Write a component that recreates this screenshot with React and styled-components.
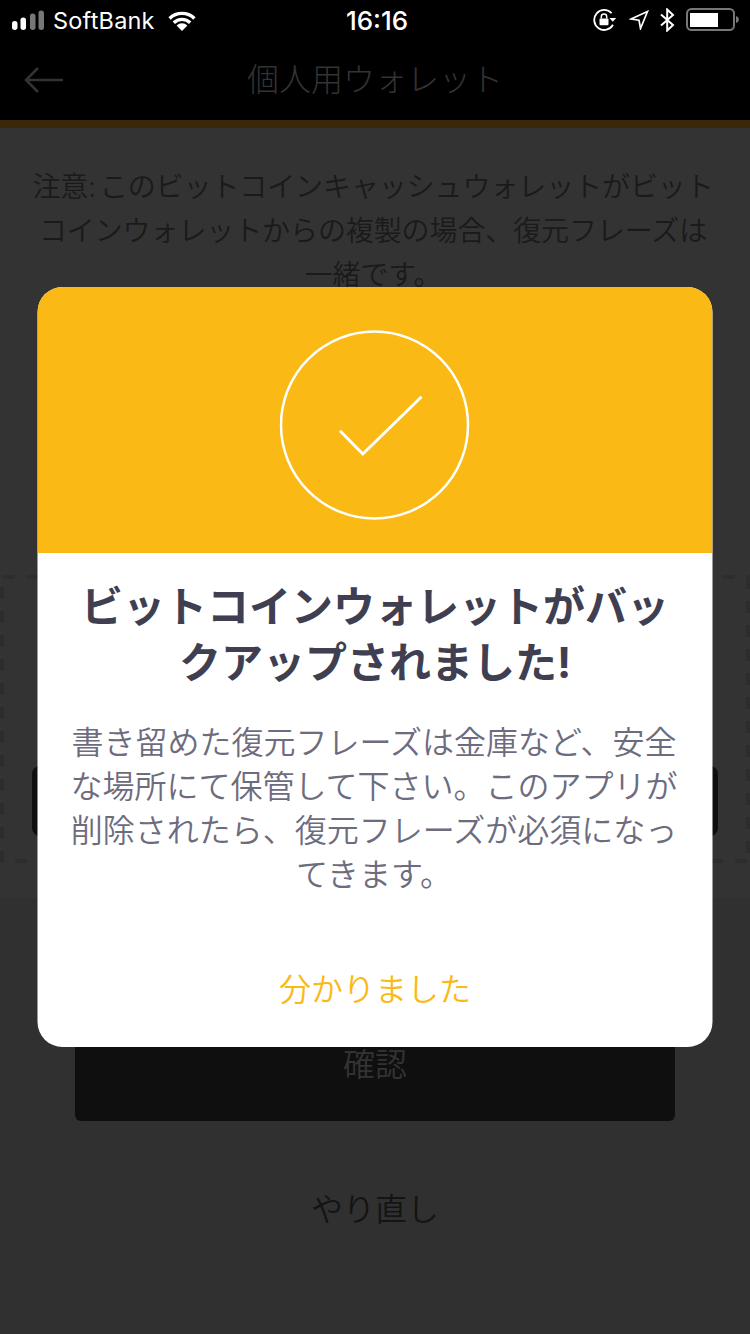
import React from 'react';
import styled, { createGlobalStyle } from 'styled-components';

const GlobalStyle = createGlobalStyle`
  html, body {
    margin: 0;
    padding: 0;
    background: #303030;
  }
  * {
    box-sizing: border-box;
  }
`;

const jpFont = `Inter, "Noto Sans CJK JP", sans-serif`;
const dash = '#2d2d2d';

const Screen = styled.div`
  position: relative;
  width: 750px;
  height: 1334px;
  overflow: hidden;
  background: #333333;
  font-family: ${jpFont};
  font-size: 32px;
  font-weight: 350;
`;

const StatusBar = styled.div`
  display: grid;
  grid-template-columns: 1fr auto 1fr;
  align-items: center;
  height: 40px;
  padding: 0 10px 0 12px;
  background: #000;
  color: #fff;
`;

const StatusLeft = styled.div`
  display: flex;
  align-items: center;
`;

const StatusRight = styled.div`
  display: flex;
  align-items: center;
  justify-content: flex-end;
  gap: 11px;
`;

const Carrier = styled.span`
  margin: 0 13px 0 9px;
  font-size: 23.5px;
  font-weight: 400;
  letter-spacing: 0.2px;
`;

const Clock = styled.span`
  padding-left: 2px;
  font-size: 26px;
  font-weight: 500;
`;

const NavBar = styled.div`
  display: grid;
  grid-template-columns: 1fr auto 1fr;
  align-items: center;
  height: 80px;
  padding: 0 24px;
  background: #000;
`;

const NavTitle = styled.div`
  color: #333;
  font-weight: 300;
  line-height: 44px;
`;

const GoldLine = styled.div`
  height: 8px;
  background: #3a2808;
`;

const Notice = styled.p`
  margin: 0;
  padding: 37px 34px 0 30px;
  color: #1a1a1a;
  font-size: 28px;
  line-height: 44px;
  letter-spacing: -0.1px;
  text-align: center;
  word-spacing: -4px;
`;

/* dashes are 12 on, 12 off and thicker than a css dashed border gives */
const DashedBox = styled.div`
  display: flex;
  flex-direction: column;
  justify-content: flex-end;
  height: 288px;
  margin-top: 278px;
  padding: 0 32px 27px;
  background-image:
    repeating-linear-gradient(90deg, ${dash} 0 12px, transparent 12px 24px),
    repeating-linear-gradient(90deg, ${dash} 0 12px, transparent 12px 24px),
    repeating-linear-gradient(180deg, ${dash} 0 12px, transparent 12px 24px),
    repeating-linear-gradient(180deg, ${dash} 0 12px, transparent 12px 24px);
  background-repeat: no-repeat;
  background-size: 100% 4px, 100% 4px, 4px 100%, 4px 100%;
  background-position: 3px 0, 15px 100%, 0 12px, 100% 2px;
`;

const PhraseBar = styled.div`
  height: 70px;
  border-radius: 8px;
  background: #0f0f0f;
`;

const Footer = styled.div`
  display: flex;
  flex-direction: column;
  align-items: center;
  height: 436px;
  margin-top: 35px;
  padding-top: 111px;
  background: #303030;
`;

const ConfirmButton = styled.div`
  display: flex;
  align-items: center;
  justify-content: center;
  width: 600px;
  height: 112px;
  padding-bottom: 6px;
  border-radius: 6px;
  background: #0f0f0f;
  color: #333;
`;

const RetryLink = styled.div`
  margin-top: 67px;
  color: #141414;
  line-height: 44px;
`;

const Modal = styled.div`
  position: absolute;
  top: 287px;
  left: 50%;
  display: flex;
  flex-direction: column;
  width: 675px;
  height: 760px;
  overflow: hidden;
  border-radius: 25px;
  background: #fff;
  transform: translateX(-50%);
`;

const ModalBanner = styled.div`
  display: flex;
  justify-content: center;
  height: 266px;
  padding-top: 42px;
  background: #fbb916;
`;

const ModalBody = styled.div`
  display: flex;
  flex: 1;
  flex-direction: column;
  align-items: center;
  padding: 26px 30px 0;
  text-align: center;
`;

const ModalTitle = styled.h2`
  margin: 0;
  color: #403f52;
  font-size: 42px;
  font-weight: 700;
  line-height: 56px;
`;

const ModalText = styled.p`
  margin: 30px 0 0;
  padding-right: 2px;
  color: #6d6c7e;
  line-height: 44px;
`;

const ModalAction = styled.div`
  margin-top: 71px;
  color: #fbb916;
  line-height: 44px;
`;

const SignalIcon = () => (
  <svg width="32" height="20" viewBox="0 0 32 20">
    <rect x="0" y="11" width="5.5" height="9" rx="2.7" fill="#fff" />
    <rect x="8.5" y="7.5" width="5.5" height="12.5" rx="2.7" fill="#fff" />
    <rect x="18" y="3.5" width="5.5" height="16.5" rx="2.7" fill="#777" />
    <rect x="26.5" y="0.5" width="5.5" height="19.5" rx="2.7" fill="#777" />
  </svg>
);

const WifiIcon = () => (
  <svg width="28" height="21" viewBox="0 0 28 21">
    <path d="M14 21 L8.6 15.4 A7.6 7.6 0 0 1 19.4 15.4 Z" fill="#fff" />
    <path d="M4.6 11.5 A13.4 13.4 0 0 1 23.4 11.5 L21 13.9 A10 10 0 0 0 7 13.9 Z" fill="#fff" />
    <path d="M0.4 7.3 A19.2 19.2 0 0 1 27.6 7.3 L25.2 9.7 A15.8 15.8 0 0 0 2.8 9.7 Z" fill="#fff" />
  </svg>
);

const RotationLockIcon = () => (
  <svg width="25" height="22" viewBox="0 0 25 22" fill="none">
    <path d="M18.6 4.2 A10 10 0 1 0 20 15.8" stroke="#fff" strokeWidth="1.8" />
    <path d="M16.4 9 L23.2 9 L19.8 12.8 Z" fill="#fff" />
    <rect x="6.5" y="9.5" width="9" height="6.8" rx="1" fill="#fff" />
    <path d="M8.3 9.5 V7.8 A2.7 2.7 0 0 1 13.7 7.8 V9.5" stroke="#fff" strokeWidth="1.5" />
  </svg>
);

const LocationIcon = () => (
  <svg width="20" height="20" viewBox="0 0 20 20" fill="none">
    <path d="M18.5 1.5 L2 9 L10 10.2 L11.5 18.5 Z" stroke="#fff" strokeWidth="1.7" strokeLinejoin="miter" />
  </svg>
);

const BluetoothIcon = () => (
  <svg width="15" height="24" viewBox="0 0 15 24" fill="none">
    <path d="M1 6.5 L13 17 L7.2 22.5 V1.5 L13 7 L1 17.5" stroke="#fff" strokeWidth="2" />
  </svg>
);

const BatteryIcon = () => (
  <svg width="54" height="24" viewBox="0 0 54 24" fill="none">
    <rect x="1" y="1" width="47" height="21" rx="4.5" stroke="#777" strokeWidth="2" />
    <rect x="4" y="5" width="28" height="14" fill="#fff" />
    <path d="M50 8 A4 4 0 0 1 53 11.5 A4 4 0 0 1 50 15 Z" fill="#777" />
  </svg>
);

const BackArrow = () => (
  <svg width="40" height="26" viewBox="0 0 40 26" fill="none" stroke="#333" strokeWidth="2.5">
    <path d="M39 13 H2" />
    <path d="M14 1 L2 13 L14 25" />
  </svg>
);

const SuccessBadge = () => (
  <svg width="192" height="192" viewBox="0 0 192 192" fill="none" stroke="#fff" strokeWidth="2.5">
    <circle cx="95" cy="96" r="93.5" />
    <path d="M60.5 101.7 L83.3 125 L142 67.7" strokeWidth="3" />
  </svg>
);

export default function App() {
  return (
    <>
      <GlobalStyle />
      <Screen>
        <StatusBar>
          <StatusLeft>
            <SignalIcon />
            <Carrier>SoftBank</Carrier>
            <WifiIcon />
          </StatusLeft>
          <Clock>16:16</Clock>
          <StatusRight>
            <RotationLockIcon />
            <LocationIcon />
            <BluetoothIcon />
            <BatteryIcon />
          </StatusRight>
        </StatusBar>
        <NavBar>
          <BackArrow />
          <NavTitle>個人用ウォレット</NavTitle>
        </NavBar>
        <GoldLine />
        <Notice>
          注意: このビットコインキャッシュウォレットがビットコインウォレットからの複製の場合、復元フレーズは一緒です。
        </Notice>
        <DashedBox>
          <PhraseBar />
        </DashedBox>
        <Footer>
          <ConfirmButton>確認</ConfirmButton>
          <RetryLink>やり直し</RetryLink>
        </Footer>
        <Modal>
          <ModalBanner>
            <SuccessBadge />
          </ModalBanner>
          <ModalBody>
            <ModalTitle>ビットコインウォレットがバックアップされました!</ModalTitle>
            <ModalText>
              書き留めた復元フレーズは金庫など、安全な場所にて保管して下さい。このアプリが削除されたら、復元フレーズが必須になってきます。
            </ModalText>
            <ModalAction>分かりました</ModalAction>
          </ModalBody>
        </Modal>
      </Screen>
    </>
  );
}
